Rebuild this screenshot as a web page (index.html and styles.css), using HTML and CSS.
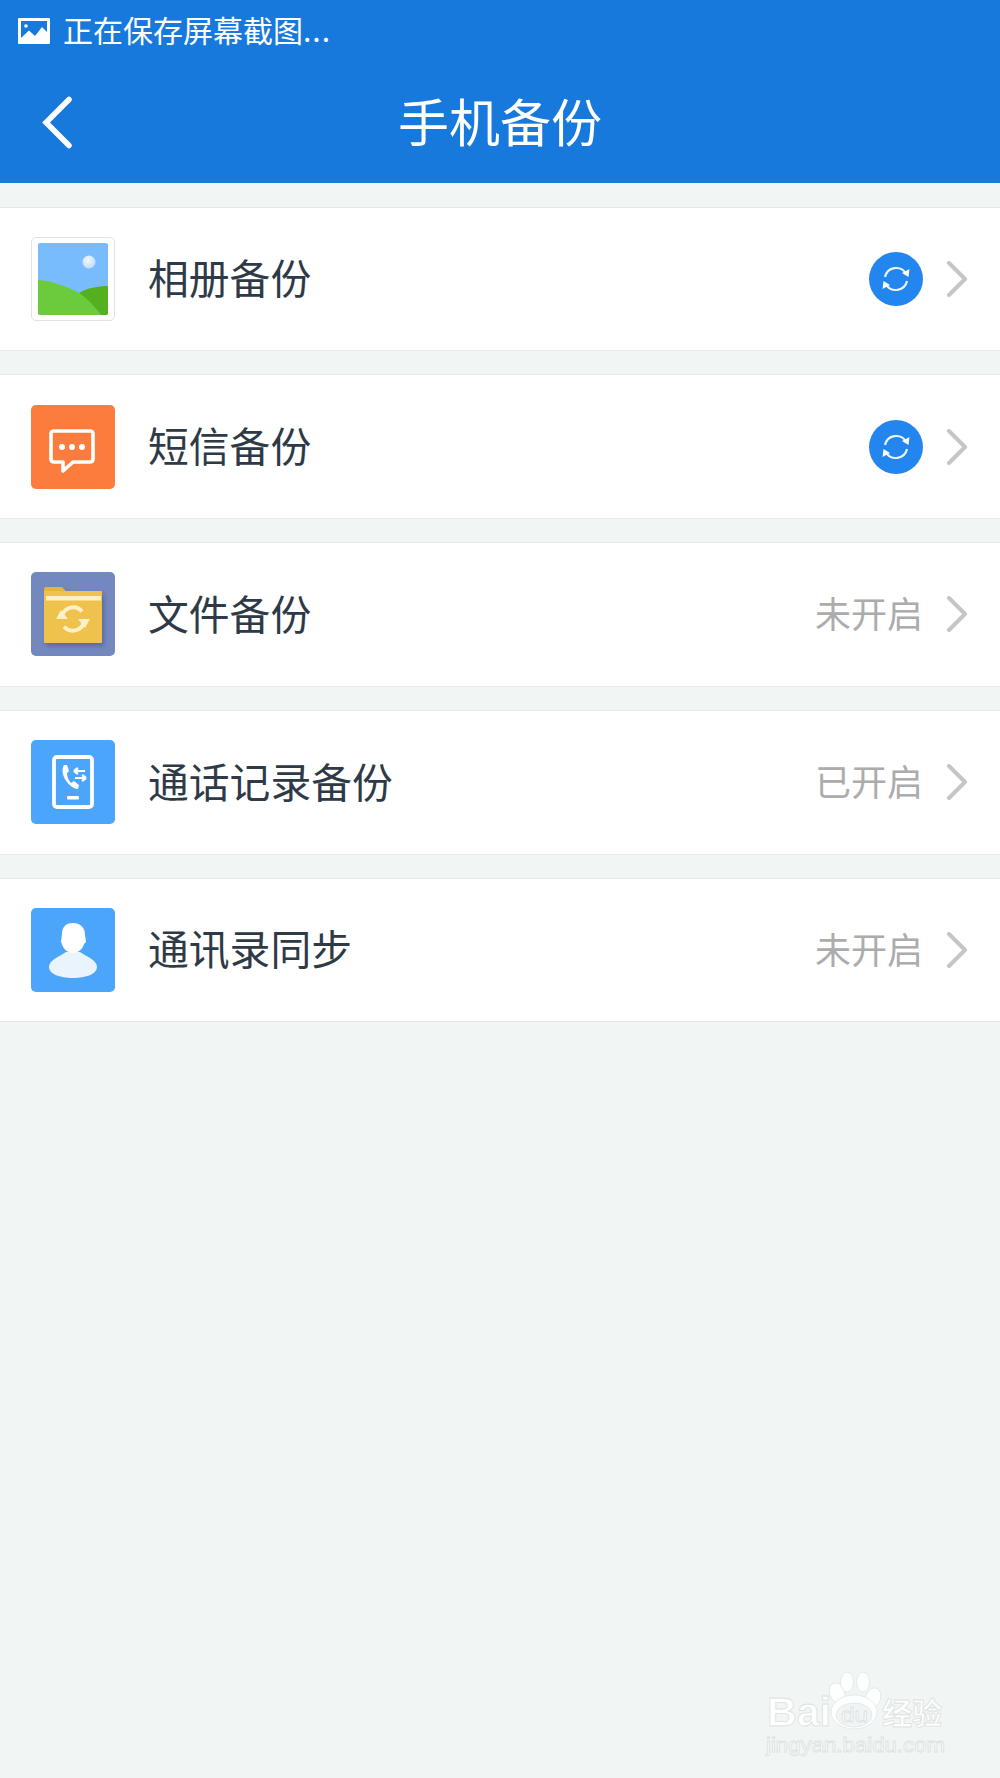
FILE: index.html
```html
<!DOCTYPE html>
<html lang="zh-CN">
<head>
    <meta charset="UTF-8">
    <title>手机备份</title>
    <link rel="stylesheet" href="styles.css">
</head>
<body>

<svg width="0" height="0" class="defs">
    <defs>
        <symbol id="chevron" viewBox="0 0 22 36">
            <path d="M3 2 L19 18 L3 34" fill="none" stroke="#c6c6c6" stroke-width="4" stroke-linecap="round" stroke-linejoin="round"/>
        </symbol>
        <symbol id="sync-badge" viewBox="0 0 54 54">
            <circle cx="27" cy="27" r="27" fill="#2386ee"/>
            <path d="M16 25 A11.5 11.5 0 0 1 37 21.5" fill="none" stroke="#eaf4fd" stroke-width="2.2"/>
            <path d="M40.5 17 L39.5 25 L33 21 Z" fill="#fff"/>
            <path d="M38 29 A11.5 11.5 0 0 1 17 32.5" fill="none" stroke="#eaf4fd" stroke-width="2.2"/>
            <path d="M13.5 37 L14.5 29 L21 33 Z" fill="#fff"/>
        </symbol>
        <radialGradient id="sun" cx="0.4" cy="0.35" r="0.7">
            <stop offset="0" stop-color="#f2f7fc"/>
            <stop offset="1" stop-color="#bcdcfa"/>
        </radialGradient>
    </defs>
</svg>

<header class="app-header">
    <div class="status-bar">
        <svg class="status-icon" width="32" height="26" viewBox="0 0 32 26">
            <path fill="#fff" fill-rule="evenodd" d="M1 0 H31 Q32 0 32 1 V25 Q32 26 31 26 H1 Q0 26 0 25 V1 Q0 0 1 0 Z M3 3 V20 L11 12.5 L17 18 L24 9 L29 14 V3 Z"/>
            <circle cx="8" cy="8" r="1.8" fill="#fff"/>
        </svg>
        <span class="status-text">正在保存屏幕截图<span class="dots">...</span></span>
    </div>
    <div class="title-bar">
        <svg class="back-icon" width="34" height="54" viewBox="0 0 34 54">
            <path d="M29 4.5 L6 27.5 L29 50.5" fill="none" stroke="#fff" stroke-width="5.5" stroke-linecap="round"/>
        </svg>
        <h1>手机备份</h1>
    </div>
</header>

<main class="list">

    <div class="row">
        <div class="icon icon-photo">
            <svg width="70" height="72" viewBox="0 0 70 72">
                <rect width="70" height="72" rx="2" fill="#79bcfd"/>
                <circle cx="51" cy="19" r="6.5" fill="url(#sun)"/>
                <path d="M41 50 C49 45 60 43 70 43 V70 Q70 72 68 72 H63 Z" fill="#55b020"/>
                <path d="M0 37 C15 38 30 44 41 50 C50 56 57 64 63 72 H2 Q0 72 0 70 Z" fill="#6ccb3c"/>
            </svg>
        </div>
        <span class="row-label">相册备份</span>
        <svg class="badge" width="54" height="54"><use href="#sync-badge"/></svg>
        <svg class="chevron" width="22" height="36"><use href="#chevron"/></svg>
    </div>

    <div class="row">
        <div class="icon icon-sms">
            <svg width="84" height="84" viewBox="0 0 84 84">
                <path d="M23 26 H59 Q62 26 62 29 V54 Q62 57 59 57 H42 L32 66 V57 H23 Q20 57 20 54 V29 Q20 26 23 26 Z" fill="none" stroke="#fff" stroke-width="3.6" stroke-linejoin="round"/>
                <circle cx="31" cy="42" r="3" fill="#fff"/>
                <circle cx="41" cy="42" r="3" fill="#fff"/>
                <circle cx="51" cy="42" r="3" fill="#fff"/>
            </svg>
        </div>
        <span class="row-label">短信备份</span>
        <svg class="badge" width="54" height="54"><use href="#sync-badge"/></svg>
        <svg class="chevron" width="22" height="36"><use href="#chevron"/></svg>
    </div>

    <div class="row">
        <div class="icon icon-folder">
            <svg class="folder-art" width="84" height="84" viewBox="0 0 84 84">
                <path d="M13 18 Q13 15 15 15 H31 L35 19 H70 Q71 19 71 20 V26 H13 Z" fill="#e6b43d"/>
                <rect x="13" y="19" width="58" height="52" rx="1" fill="#eec24d"/>
                <rect x="15" y="24" width="55" height="4.5" fill="#fdf0c6"/>
                <path d="M31 44 A11.5 11.5 0 0 1 51 39.5" fill="none" stroke="#fdf0c6" stroke-width="3.8"/>
                <path d="M53 50 A11.5 11.5 0 0 1 33 54.5" fill="none" stroke="#fdf0c6" stroke-width="3.8"/>
                <path d="M25 47 L37 47 L30 38 Z M59 47 L47 47 L54 56 Z" fill="#fdf0c6"/>
            </svg>
        </div>
        <span class="row-label">文件备份</span>
        <span class="row-status">未开启</span>
        <svg class="chevron" width="22" height="36"><use href="#chevron"/></svg>
    </div>

    <div class="row">
        <div class="icon icon-blue">
            <svg width="84" height="84" viewBox="0 0 84 84">
                <rect x="23" y="17" width="38" height="50" rx="3" fill="none" stroke="#fff" stroke-width="3.8"/>
                <path d="M33 25 C30 30 32 37 36 42 C39 46 43 49 47 49 L48 45 L43 41 L40 43 C37 40 36 36 36 33 L38 31 L36 25 Z" fill="#fff"/>
                <path d="M43 31 H54 M43 31 L47 28 M43 31 L47 34 M55 38 H44 M55 38 L51 35 M55 38 L51 41" fill="none" stroke="#fff" stroke-width="2.2"/>
                <rect x="36" y="56" width="12" height="3.4" rx="1" fill="#fff"/>
            </svg>
        </div>
        <span class="row-label">通话记录备份</span>
        <span class="row-status">已开启</span>
        <svg class="chevron" width="22" height="36"><use href="#chevron"/></svg>
    </div>

    <div class="row">
        <div class="icon icon-blue">
            <svg width="84" height="84" viewBox="0 0 84 84">
                <path d="M18 59 C18 52 28 49 35 44 H49 C56 49 66 52 66 59 C66 66 55 70 42 70 C29 70 18 66 18 59 Z" fill="#eaf4fd"/>
                <path d="M31 26 C31 18 36 15 42 15 C50 15 54 20 54 27 L55 34 L53 36 C52 41 47 45 42 45 C37 45 32 41 31 36 L30 34 Z" fill="#fff"/>
            </svg>
        </div>
        <span class="row-label">通讯录同步</span>
        <span class="row-status">未开启</span>
        <svg class="chevron" width="22" height="36"><use href="#chevron"/></svg>
    </div>

</main>

<!-- 水印 -->
<svg class="watermark" width="220" height="128" viewBox="0 0 220 128">
    <g fill="#fdfefe" stroke="#e1e5e5" stroke-width="0.8">
        <ellipse cx="97" cy="43" rx="7.5" ry="10.5" transform="rotate(-20 97 43)"/>
        <ellipse cx="107" cy="32" rx="6.5" ry="10"/>
        <ellipse cx="123" cy="32" rx="6.5" ry="10"/>
        <ellipse cx="133" cy="48" rx="7.5" ry="10.5" transform="rotate(20 133 48)"/>
        <ellipse cx="114" cy="62" rx="23" ry="17"/>
        <ellipse cx="114" cy="65" rx="18" ry="12" fill="#f1f4f4"/>
    </g>
    <g class="wm-text wm-latin">
        <text x="27" y="76" font-size="41" font-weight="700" textLength="64" lengthAdjust="spacingAndGlyphs">Bai</text>
        <text x="101" y="72" font-size="21" textLength="27" lengthAdjust="spacingAndGlyphs">du</text>
        <text x="26" y="102" font-size="20" textLength="179" lengthAdjust="spacingAndGlyphs">jingyan.baidu.com</text>
    </g>
    <text class="wm-text wm-cjk" x="142" y="74" font-size="30" font-weight="700">经验</text>
</svg>

</body>
</html>
```

FILE: styles.css
```css
* {
    box-sizing: border-box;
}

html, body {
    margin: 0;
    padding: 0;
}

body {
    position: relative;
    width: 1000px;
    height: 1778px;
    overflow: hidden;
    background-color: #f1f5f4;
    font-family: "Noto Sans CJK SC", "Noto Sans", sans-serif;
}

.defs {
    position: absolute;
}

.app-header {
    height: 183px;
    background-color: #1779dc;
    color: white;
}

.status-bar {
    display: flex;
    align-items: center;
    height: 62px;
    padding-left: 18px;
}

.status-icon {
    margin-right: 13px;
}

.status-text {
    font-size: 30px;
    line-height: 58px;
    padding-bottom: 4px;
}

.dots {
    letter-spacing: 1px;
}

.title-bar {
    position: relative;
    display: flex;
    align-items: center;
    justify-content: center;
    height: 121px;
    padding-bottom: 4px;
}

.title-bar h1 {
    margin: 0;
    font-size: 51px;
    font-weight: 400;
    line-height: 117px;
}

.back-icon {
    position: absolute;
    left: 40px;
    top: 33px;
}

.list {
    display: flex;
    flex-direction: column;
    gap: 23px;
    padding-top: 23.5px;
}

.row {
    display: flex;
    align-items: center;
    height: 144.75px;
    padding: 0 32px 0 30.5px;
    background-color: white;
    border-top: 1px solid #e4e7e7;
    border-bottom: 1px solid #e4e7e7;
}

.icon {
    display: flex;
    align-items: center;
    justify-content: center;
    width: 84px;
    height: 84px;
    margin-right: 33.5px;
    border-radius: 5px;
    flex-shrink: 0;
}

.icon-photo {
    background-color: white;
    border: 1px solid #e2e2e2;
}

.icon-sms {
    background-color: #fb7c3c;
}

.icon-folder {
    background-color: #7388bf;
}

.folder-art {
    filter: drop-shadow(2px 3px 2px rgba(60, 70, 110, 0.45));
}

.icon-blue {
    background-color: #4ba6fb;
}

.row-label {
    flex: 1;
    padding-bottom: 4px;
    font-size: 40.8px;
    color: #2f3a47;
}

.row-status {
    margin-right: 23px;
    padding-bottom: 4px;
    font-size: 36px;
    color: #acacac;
}

.badge {
    margin-right: 23px;
}

.watermark {
    position: absolute;
    left: 740px;
    top: 1650px;
}

.wm-text {
    fill: #fdfefe;
    stroke: #dde1e1;
    stroke-width: 0.8px;
}

.wm-latin {
    font-family: "Liberation Sans", sans-serif;
}

.wm-cjk {
    font-family: "Noto Sans CJK SC", sans-serif;
}
```
